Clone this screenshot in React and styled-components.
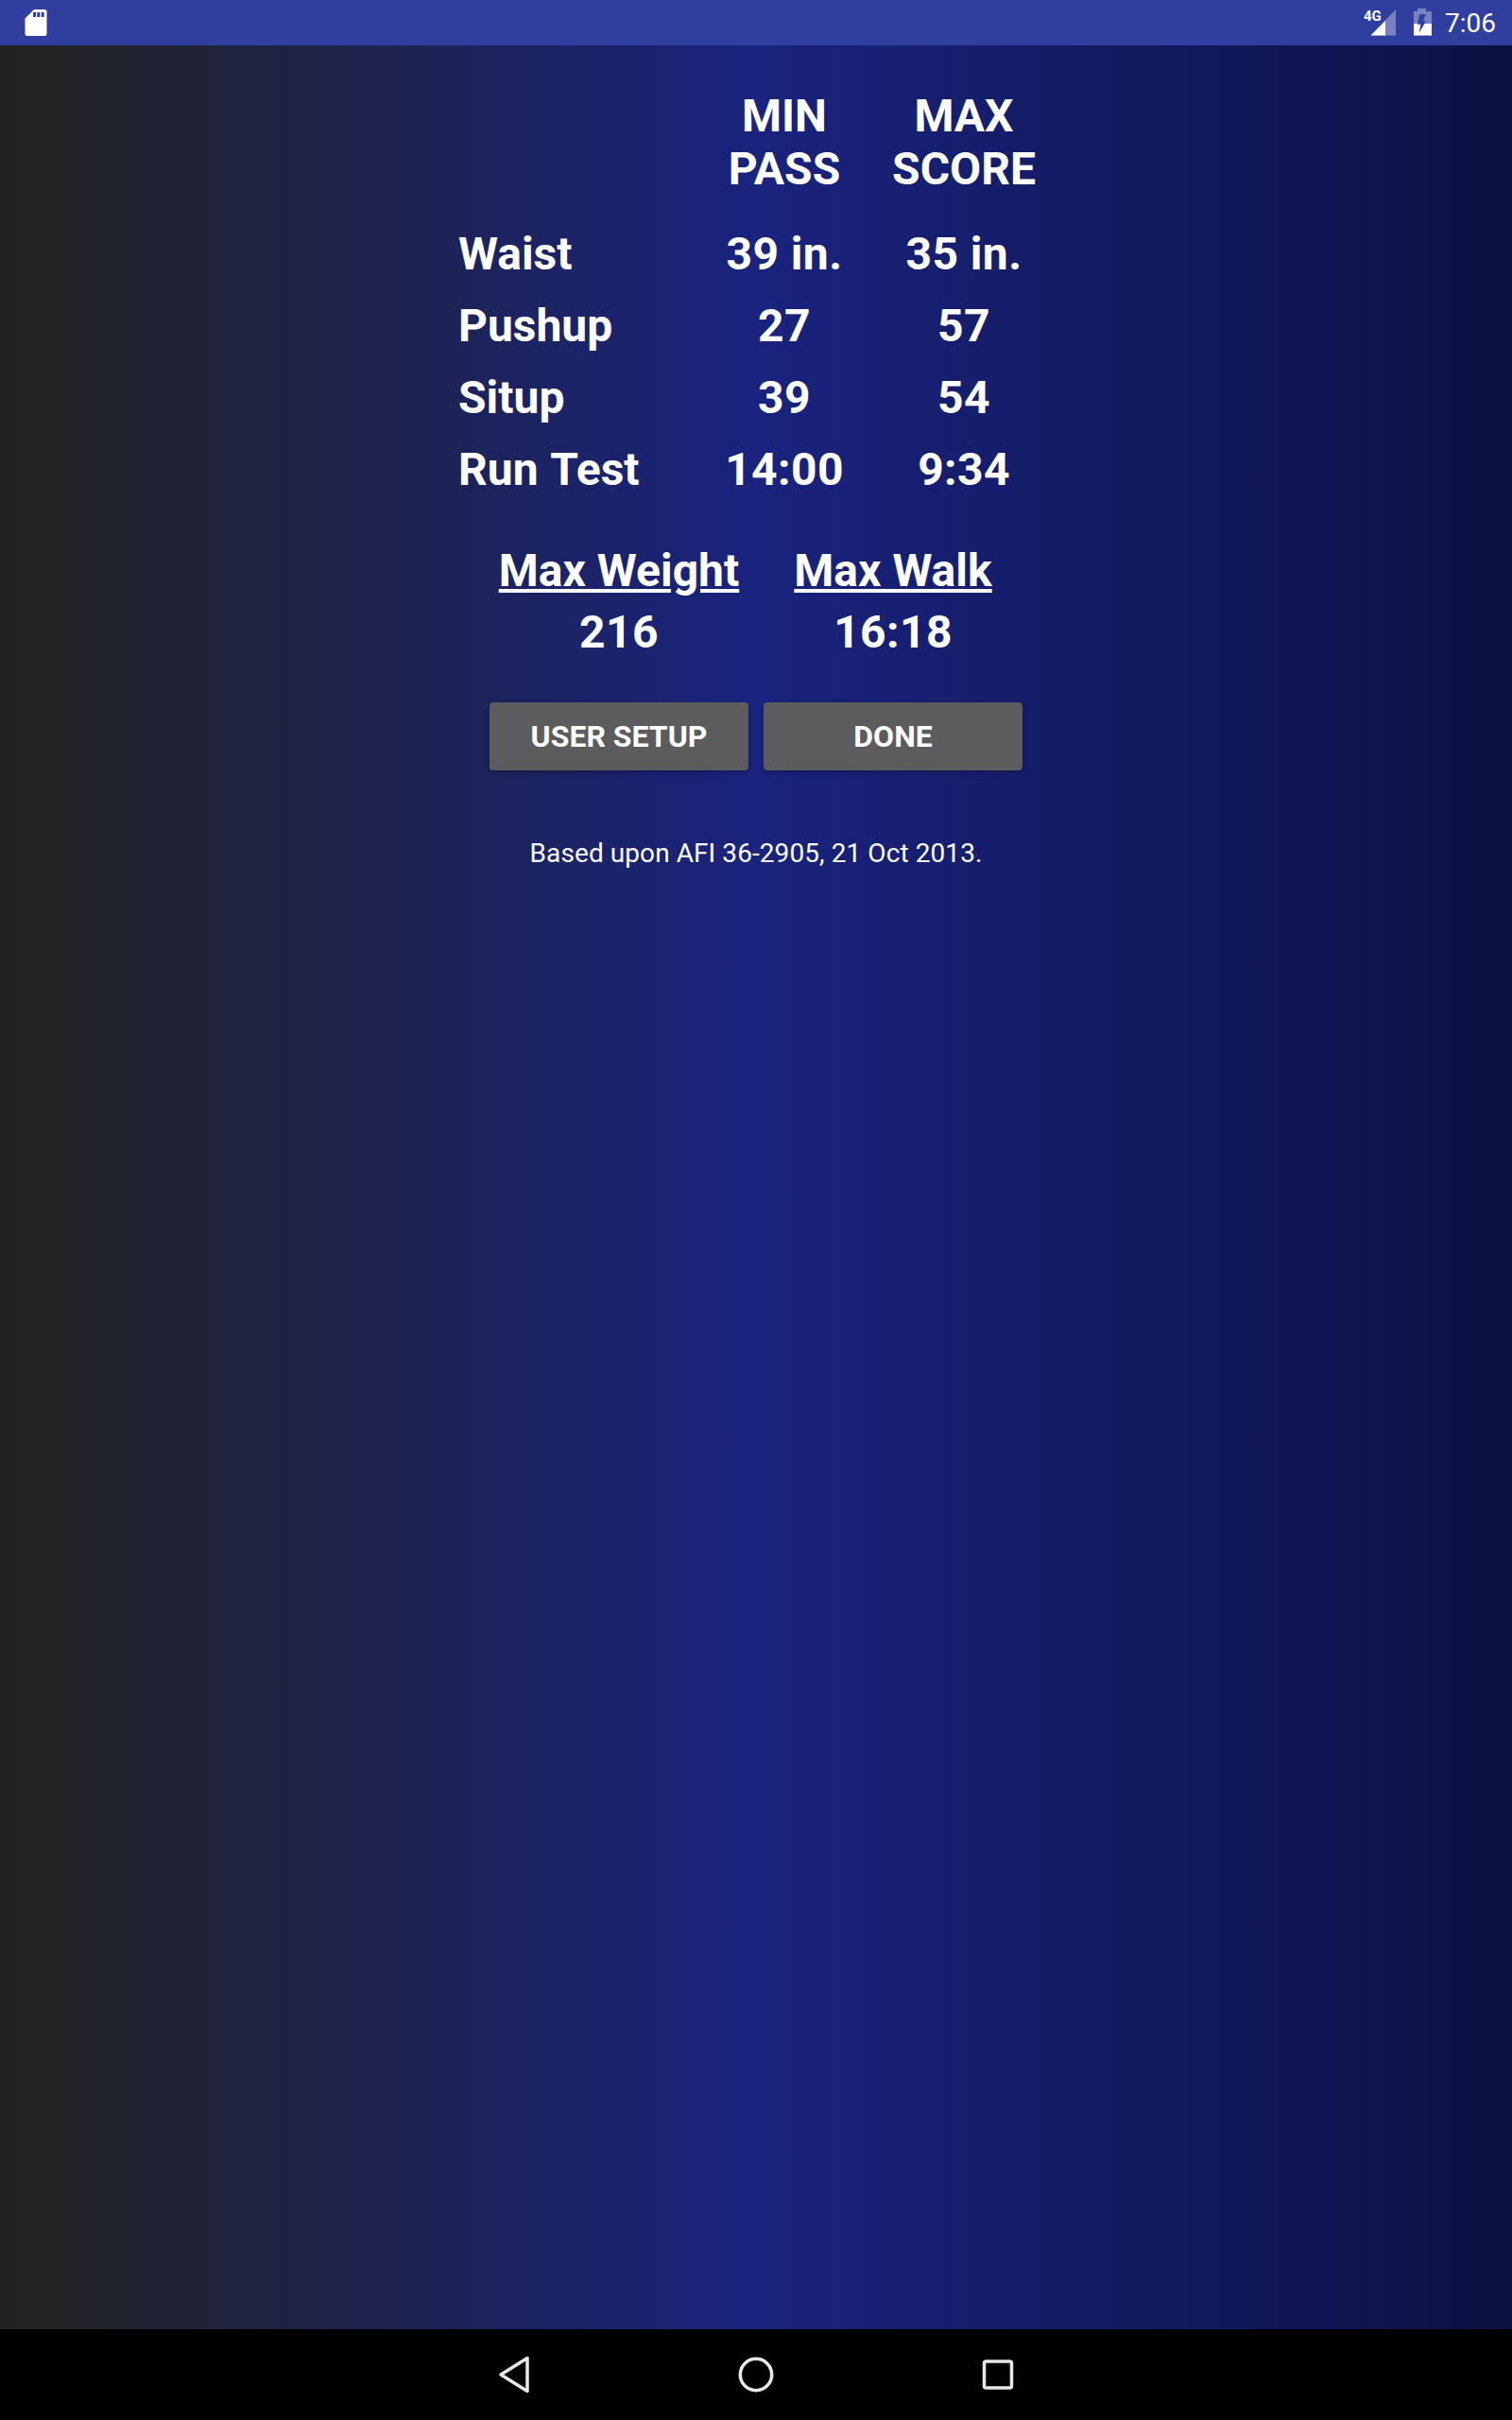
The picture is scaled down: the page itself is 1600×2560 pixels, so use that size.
import React from "react";
import styled, { createGlobalStyle } from "styled-components";

const GlobalStyle = createGlobalStyle`
  html, body {
    margin: 0;
    padding: 0;
    background: #000;
  }
  body {
    font-family: Roboto, "Liberation Sans", sans-serif;
    color: #fff;
  }
`;

const rows = [
  { label: "Waist", min: "39 in.", max: "35 in." },
  { label: "Pushup", min: "27", max: "57" },
  { label: "Situp", min: "39", max: "54" },
  { label: "Run Test", min: "14:00", max: "9:34" },
];

function SdCardIcon() {
  return (
    <svg width="24" height="28" viewBox="0 0 24 28">
      <path
        fill="#fff"
        fillRule="evenodd"
        d="M10 0H21a2.500 2.500 0 0 1 2.500 2.500V25.500A2.500 2.500 0 0 1 21 28H3a2.500 2.500 0 0 1-2.500-2.500V9.500ZM9 3v5h3V3ZM13.300 3v5h3V3ZM17.700 3v5h3V3Z"
      />
    </svg>
  );
}

function SignalIcon() {
  return (
    <svg width="44" height="40" viewBox="0 0 44 40">
      <path fill="#fff" fillOpacity="0.35" d="M38 6V33.500H11.500Z" />
      <path fill="#fff" d="M11.500 33.500L27 18V33.500Z" />
      <text x="4" y="17.700" fill="#fff" fontSize="15" fontWeight="700" fontFamily="Roboto, sans-serif">
        4G
      </text>
    </svg>
  );
}

function BatteryIcon() {
  return (
    <svg width="32" height="40" viewBox="0 0 32 40">
      <path fill="#fff" fillOpacity="0.35" d="M11 5h9v3h6v25.500H7V8h4Z" />
      <path fill="#fff" d="M7 21H26V33.500H7Z" />
      <path fill="#303f9f" d="M20 11H13.300L11 21.700H14.300L12.700 31L20 18.300H16.700Z" />
    </svg>
  );
}

function BackIcon() {
  return (
    <svg width="40" height="44" viewBox="0 0 40 44">
      <path
        fill="none"
        stroke="#e8e8e8"
        strokeWidth="3.500"
        strokeLinejoin="round"
        d="M33 4.500V39.500L5 22Z"
      />
    </svg>
  );
}

function HomeIcon() {
  return (
    <svg width="40" height="40" viewBox="0 0 40 40">
      <circle cx="20" cy="20" r="16.700" fill="none" stroke="#e8e8e8" strokeWidth="3.500" />
    </svg>
  );
}

function RecentIcon() {
  return (
    <svg width="36" height="36" viewBox="0 0 36 36">
      <rect x="4.500" y="4" width="29" height="28" rx="2" fill="none" stroke="#e8e8e8" strokeWidth="3.500" />
    </svg>
  );
}

export default function App() {
  return (
    <Screen>
      <GlobalStyle />
      <StatusBar>
        <SdSlot>
          <SdCardIcon />
        </SdSlot>
        <StatusRight>
          <SignalIcon />
          <BatteryIcon />
          <Clock>7:06</Clock>
        </StatusRight>
      </StatusBar>

      <Content>
        <ScoreTable>
          <HeaderRow>
            <span />
            <HeaderCell>
              MIN
              <br />
              PASS
            </HeaderCell>
            <HeaderCell>
              MAX
              <br />
              SCORE
            </HeaderCell>
          </HeaderRow>
          {rows.map((row) => (
            <ScoreRow key={row.label}>
              <RowLabel>{row.label}</RowLabel>
              <ScoreCell>{row.min}</ScoreCell>
              <ScoreCell>{row.max}</ScoreCell>
            </ScoreRow>
          ))}
        </ScoreTable>

        <MaxGrid>
          <MaxColumn>
            <MaxTitle>Max Weight</MaxTitle>
            <MaxValue>216</MaxValue>
          </MaxColumn>
          <MaxColumn>
            <MaxTitle>Max Walk</MaxTitle>
            <MaxValue>16:18</MaxValue>
          </MaxColumn>
        </MaxGrid>

        <Buttons>
          <ActionButton>USER SETUP</ActionButton>
          <ActionButton>DONE</ActionButton>
        </Buttons>

        <Footnote>Based upon AFI 36-2905, 21 Oct 2013.</Footnote>
      </Content>

      <NavBar>
        <NavSlot>
          <BackIcon />
        </NavSlot>
        <NavSlot>
          <HomeIcon />
        </NavSlot>
        <NavSlot>
          <RecentIcon />
        </NavSlot>
      </NavBar>
    </Screen>
  );
}

const Screen = styled.div`
  width: 1600px;
  height: 2560px;
  display: flex;
  flex-direction: column;
  overflow: hidden;
  background: linear-gradient(90deg, #22231f 0%, #1a237e 50%, #0c1142 100%);
`;

const StatusBar = styled.header`
  height: 48px;
  flex: none;
  display: flex;
  align-items: center;
  justify-content: space-between;
  background: #303f9f;
  padding: 0 17px 0 26px;
`;

const SdSlot = styled.div`
  display: flex;
  height: 28px;
`;

const StatusRight = styled.div`
  display: flex;
  align-items: center;
  gap: 6px;
`;

const Clock = styled.span`
  font-size: 28px;
  line-height: 48px;
  margin: 2px 0 0 2px;
`;

const Content = styled.main`
  flex: 1;
  display: flex;
  flex-direction: column;
  align-items: center;
  padding-top: 47px;
`;

const ScoreTable = styled.div`
  width: 630px;
  display: flex;
  flex-direction: column;
`;

const HeaderRow = styled.div`
  display: grid;
  grid-template-columns: 250px 190px 190px;
  margin-bottom: 23px;
`;

const HeaderCell = styled.div`
  font-size: 48px;
  font-weight: 700;
  line-height: 56px;
  text-align: center;
  white-space: nowrap;
`;

const ScoreRow = styled.div`
  display: grid;
  grid-template-columns: 250px 190px 190px;
  height: 76px;
  align-items: center;
  font-size: 48px;
  font-weight: 700;
`;

const RowLabel = styled.div`
  white-space: nowrap;
  word-spacing: 2px;
`;

const ScoreCell = styled.div`
  text-align: center;
  white-space: nowrap;
  letter-spacing: 0.4px;
`;

const MaxGrid = styled.div`
  display: grid;
  grid-template-columns: 290px 290px;
  margin-top: 42px;
`;

const MaxColumn = styled.div`
  display: flex;
  flex-direction: column;
  align-items: center;
`;

const MaxTitle = styled.div`
  font-size: 48px;
  font-weight: 700;
  line-height: 56px;
  text-decoration: underline;
  margin-bottom: 9px;
`;

const MaxValue = styled.div`
  font-size: 48px;
  font-weight: 700;
  line-height: 56px;
  letter-spacing: 0.4px;
`;

const Buttons = styled.div`
  display: flex;
  gap: 16px;
  margin-top: 46px;
`;

const ActionButton = styled.button`
  width: 274px;
  height: 72px;
  border: none;
  border-radius: 4px;
  padding: 0;
  background: #5c5c5e;
  color: #fff;
  font-family: inherit;
  font-size: 32px;
  font-weight: 700;
  box-shadow: 0 2px 4px rgba(0, 0, 0, 0.3);
`;

const Footnote = styled.p`
  margin: 72px 0 0;
  font-size: 28px;
  line-height: 32px;
  letter-spacing: 0.08px;
`;

const NavBar = styled.nav`
  height: 96px;
  flex: none;
  background: #000;
  display: grid;
  grid-template-columns: 40px 40px 40px;
  justify-content: center;
  column-gap: 215px;
  align-items: center;
`;

const NavSlot = styled.div`
  display: flex;
  align-items: center;
  justify-content: center;
`;
